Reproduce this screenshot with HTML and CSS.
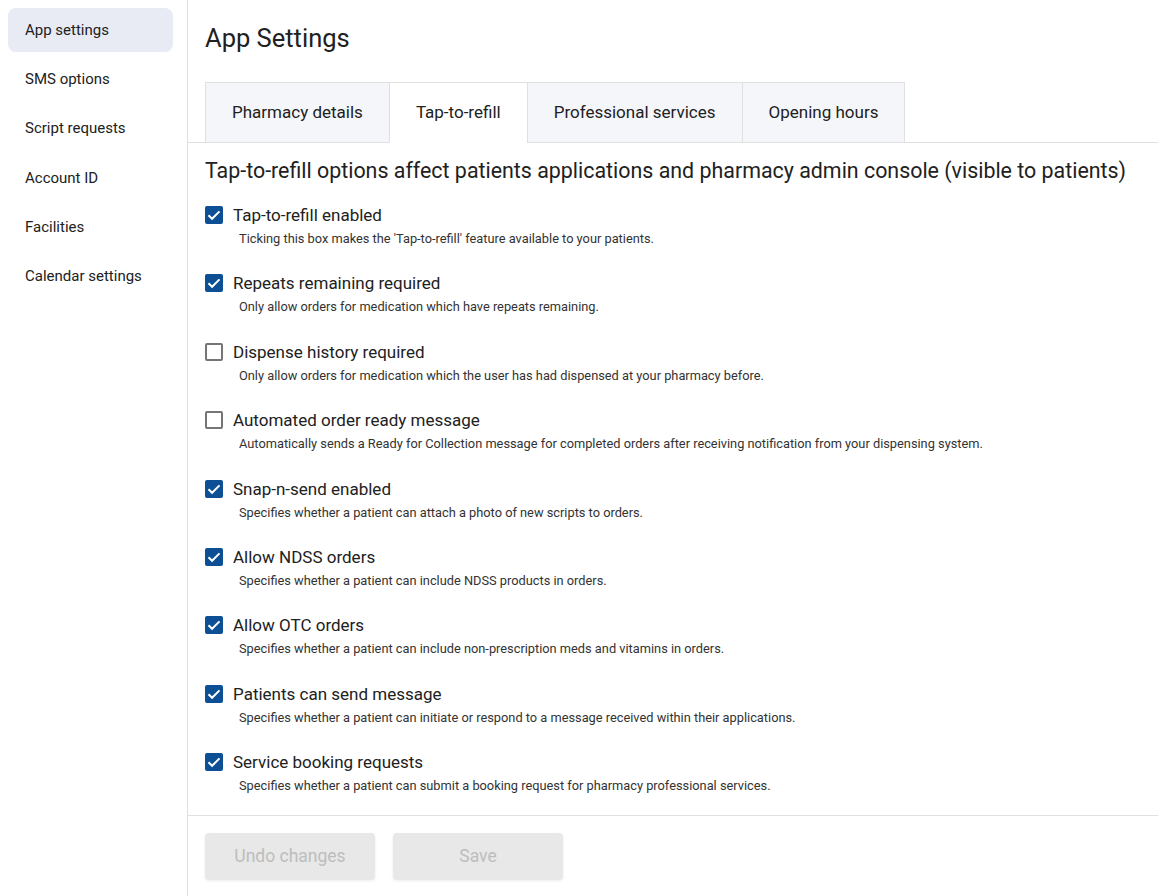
FILE: index.html
```html
<!DOCTYPE html>
<html lang="en">

<head>
    <meta charset="utf-8">
    <meta name="viewport" content="width=device-width, initial-scale=1.0">
    <title>App Settings</title>
    <link rel="stylesheet" href="styles.css">
</head>

<body>
    <aside class="sidebar">
        <a class="side-item active" href="#">App settings</a>
        <a class="side-item" href="#">SMS options</a>
        <a class="side-item" href="#">Script requests</a>
        <a class="side-item" href="#">Account ID</a>
        <a class="side-item" href="#">Facilities</a>
        <a class="side-item" href="#">Calendar settings</a>
    </aside>

    <main class="content">
        <h1 class="page-title">App Settings</h1>

        <nav class="tabs">
            <button class="tab">Pharmacy details</button>
            <button class="tab active">Tap-to-refill</button>
            <button class="tab">Professional services</button>
            <button class="tab">Opening hours</button>
        </nav>

        <section class="options">
            <h2 class="options-title">Tap-to-refill options affect patients applications and pharmacy admin console (visible to patients)</h2>

            <label class="option">
                <span class="box checked"></span>
                <span class="option-name">Tap-to-refill enabled</span>
                <span class="option-desc">Ticking this box makes the 'Tap-to-refill' feature available to your patients.</span>
            </label>
            <label class="option">
                <span class="box checked"></span>
                <span class="option-name">Repeats remaining required</span>
                <span class="option-desc">Only allow orders for medication which have repeats remaining.</span>
            </label>
            <label class="option">
                <span class="box"></span>
                <span class="option-name">Dispense history required</span>
                <span class="option-desc">Only allow orders for medication which the user has had dispensed at your pharmacy before.</span>
            </label>
            <label class="option">
                <span class="box"></span>
                <span class="option-name">Automated order ready message</span>
                <span class="option-desc">Automatically sends a Ready for Collection message for completed orders after receiving notification from your dispensing system.</span>
            </label>
            <label class="option">
                <span class="box checked"></span>
                <span class="option-name">Snap-n-send enabled</span>
                <span class="option-desc">Specifies whether a patient can attach a photo of new scripts to orders.</span>
            </label>
            <label class="option">
                <span class="box checked"></span>
                <span class="option-name">Allow NDSS orders</span>
                <span class="option-desc">Specifies whether a patient can include NDSS products in orders.</span>
            </label>
            <label class="option">
                <span class="box checked"></span>
                <span class="option-name">Allow OTC orders</span>
                <span class="option-desc">Specifies whether a patient can include non-prescription meds and vitamins in orders.</span>
            </label>
            <label class="option">
                <span class="box checked"></span>
                <span class="option-name">Patients can send message</span>
                <span class="option-desc">Specifies whether a patient can initiate or respond to a message received within their applications.</span>
            </label>
            <label class="option">
                <span class="box checked"></span>
                <span class="option-name">Service booking requests</span>
                <span class="option-desc">Specifies whether a patient can submit a booking request for pharmacy professional services.</span>
            </label>
        </section>

        <footer class="actions">
            <button class="btn" disabled>Undo changes</button>
            <button class="btn" disabled>Save</button>
        </footer>
    </main>
</body>
</html>
```

FILE: styles.css
```css
html {
    margin: 0;
}

body {
    margin: 0;
    display: flex;
    min-height: 896px;
    font-family: Roboto, "Liberation Sans", sans-serif;
    color: #212121;
    background: #fff;
}

/* sidebar */
.sidebar {
    width: 165px;
    flex-shrink: 0;
    padding: 8px 14px 8px 8px;
    border-right: 1px solid #e0e0e0;
    display: flex;
    flex-direction: column;
    gap: 5.2px;
}

.side-item {
    display: block;
    height: 44px;
    line-height: 44px;
    padding-left: 17px;
    border-radius: 8px;
    font-size: 15px;
    color: #212121;
    text-decoration: none;
}

.side-item.active {
    background: #e8ebf3;
}

/* main */
.content {
    flex: 1;
    display: flex;
    flex-direction: column;
}

.page-title {
    margin: 24px 0 30px 17px;
    font-size: 25.5px;
    line-height: 28px;
    font-weight: 400;
}

.tabs {
    display: flex;
    padding-left: 17px;
    border-bottom: 1px solid #e0e0e0;
}

.tab {
    height: 61px;
    margin-bottom: -1px;
    padding: 0 26px 2px;
    border: 1px solid #e0e0e0;
    border-right: none;
    background: #f5f6fa;
    font-family: inherit;
    font-size: 17px;
    color: #212121;
}

.tab:last-child {
    border-right: 1px solid #e0e0e0;
}

.tab.active {
    background: #fff;
    border-bottom-color: #fff;
}

.options {
    padding: 16px 17px 21px;
    border-bottom: 1px solid #e0e0e0;
}

.options-title {
    margin: 0 0 22px;
    font-size: 21.4px;
    line-height: 24px;
    font-weight: 400;
}

.option {
    display: grid;
    grid-template-columns: 28px 1fr;
    row-gap: 5px;
    margin-bottom: 26.4px;
}

.option:last-child {
    margin-bottom: 0;
}

.box {
    width: 18px;
    height: 18px;
    margin-top: 1px;
    box-sizing: border-box;
    border: 2px solid #757575;
    border-radius: 2px;
}

.box.checked {
    border: none;
    background: #0d4f94 url("data:image/svg+xml,%3Csvg xmlns='http://www.w3.org/2000/svg' viewBox='0 0 18 18'%3E%3Cpath d='M3.5 9.2l3.6 3.6 7.4-7.4' fill='none' stroke='white' stroke-width='2'/%3E%3C/svg%3E") center / 18px 18px no-repeat;
}

.option-name {
    font-size: 17px;
    line-height: 21px;
}

.option-desc {
    grid-column: 2;
    padding-left: 6px;
    font-size: 12.8px;
    line-height: 16px;
    color: #333;
}

.actions {
    display: flex;
    gap: 18px;
    padding: 17px 17px;
}

.btn {
    width: 170px;
    height: 47px;
    padding-bottom: 2px;
    border: none;
    border-radius: 4px;
    background: #e8e8e8;
    box-shadow: 0 1px 3px rgba(0, 0, 0, 0.08);
    font-family: inherit;
    font-size: 17.5px;
    color: #bdbdbd;
}
```
